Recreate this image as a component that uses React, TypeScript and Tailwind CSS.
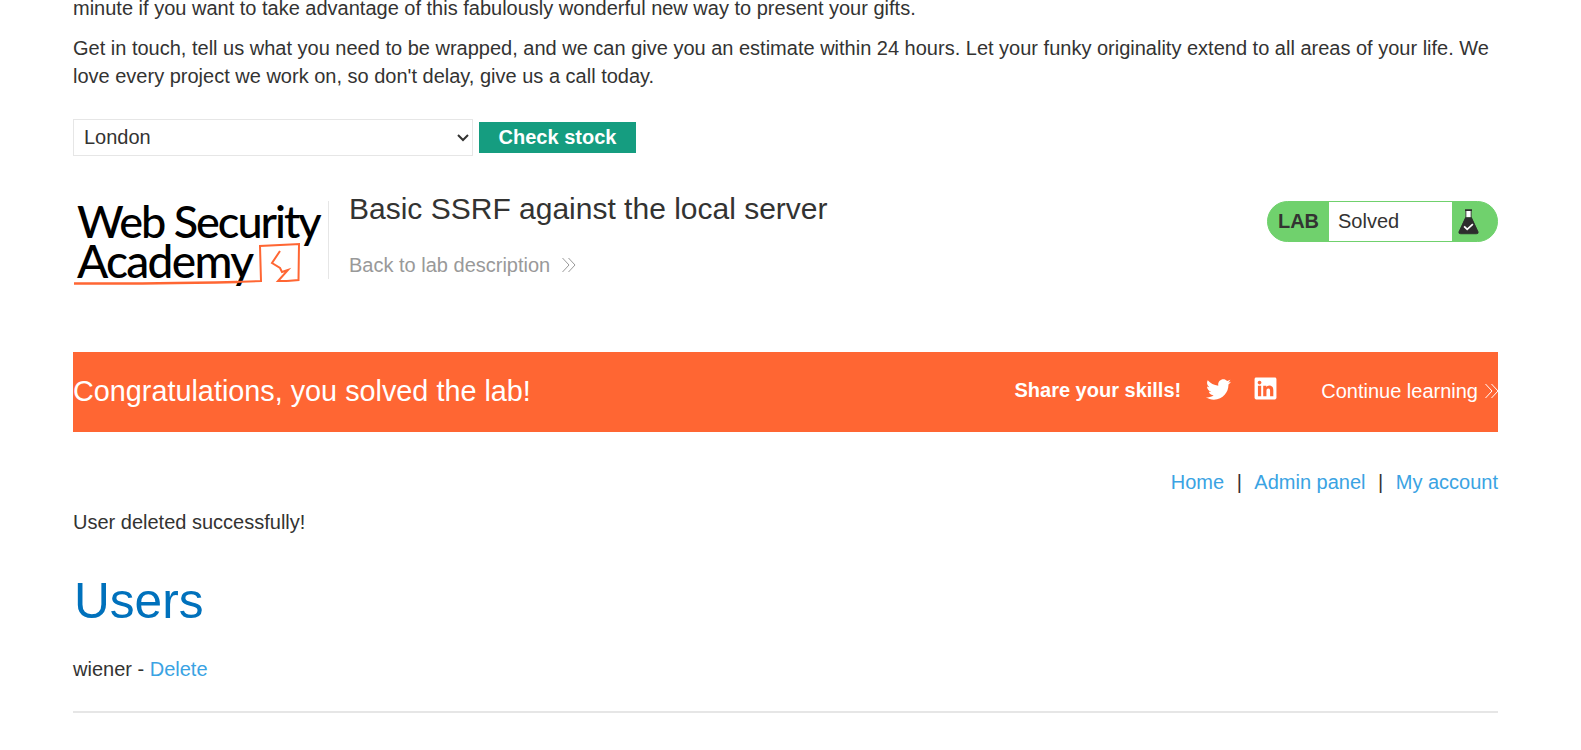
import React from "react";
import { FaTwitter, FaLinkedin } from "react-icons/fa";

function Chevrons({ className }: { className?: string }) {
  return (
    <svg viewBox="0 0 16 16" className={className} fill="none" stroke="currentColor" strokeWidth="1">
      <path d="M1.5 1 L8 8 L1.5 15" />
      <path d="M7.5 1 L14 8 L7.5 15" />
    </svg>
  );
}

function Logo() {
  return (
    <div className="relative w-[252px] h-[92px] shrink-0 font-['Lato',sans-serif] font-medium text-black">
      <div className="absolute left-[4px] top-[-3px] text-[45px] leading-[50px] tracking-[-2px] whitespace-nowrap">Web Security</div>
      <div className="absolute left-[4px] top-[37px] text-[46px] leading-[50px] tracking-[-1.7px] whitespace-nowrap">Academy</div>
      <svg viewBox="0 0 252 92" className="absolute inset-0 w-[252px] h-[92px]" fill="none" stroke="#ff6633" strokeWidth="2">
        <path d="M1 84.5 C50 85 110 84 164 83" strokeWidth="2.5" />
        <path d="M162 83 L188 82 L187 47 C205 46 215 45.5 226 45 L225.5 81 L214 82" />
        <path d="M207 52 L199 64 L207 69 L209 73 L215 71 L205 82 L214 82" />
      </svg>
    </div>
  );
}

function Flask() {
  return (
    <svg viewBox="0 0 24 30" className="w-[21px] h-[27px]">
      <rect x="8" y="1" width="8" height="2" fill="#2d2d2d" />
      <path d="M9 3 H15 V10 H9 Z" fill="#fff" />
      <path d="M9 3 V10 L1 27 Q0.5 29 3 29 H21 Q23.5 29 23 27 L15 10 V3" fill="none" stroke="#2d2d2d" strokeWidth="1" />
      <path d="M8.5 10 H15.5 L23 27 Q23.5 29 21 29 H3 Q0.5 29 1 27 Z" fill="#2d2d2d" />
      <path d="M7 20.5 L10.5 24 L17 18" fill="none" stroke="#fff" strokeWidth="2" />
    </svg>
  );
}

export default function App() {
  return (
    <div className="h-[750px] overflow-hidden bg-white pl-[73px] pr-[83px] font-['Liberation_Sans',Arial,sans-serif] text-[20px] leading-[28px] text-[#333332]">
      <p className="-mt-[6px] whitespace-nowrap">minute if you want to take advantage of this fabulously wonderful new way to present your gifts.</p>
      <p className="mt-[12px]">
        Get in touch, tell us what you need to be wrapped, and we can give you an estimate within 24 hours. Let your funky originality extend to all areas of your life. We love every project we work on, so don't delay, give us a call today.
      </p>

      <div className="mt-[29px] flex items-center gap-[6px]">
        <div className="relative">
          <select className="block h-[37px] w-[400px] appearance-none border border-[#e6e6e6] bg-white pl-[10px] pb-[2px] text-[20px] text-[#333332]">
            <option>London</option>
          </select>
          <svg viewBox="0 0 12 8" className="pointer-events-none absolute right-[4px] top-[15px] h-[8px] w-[12px]" fill="none" stroke="#333332" strokeWidth="2">
            <path d="M1 1 L6 6 L11 1" />
          </svg>
        </div>
        <button className="h-[31px] w-[157px] bg-[#159d80] text-center text-[20px] font-bold leading-[31px] text-white">Check stock</button>
      </div>

      <div className="mt-[43px] flex items-start">
        <Logo />
        <div className="ml-[3px] mt-[2px] h-[78px] border-l border-[#e6e6e6] pl-[20px]">
          <h2 className="text-[30px] leading-[14px] pt-[1px] text-[#333332] whitespace-nowrap">Basic SSRF against the local server</h2>
          <a className="mt-[35px] flex items-center gap-[11px] text-[#999] text-[20px] leading-[28px] whitespace-nowrap">
            Back to lab description
            <Chevrons className="h-[16px] w-[16px]" />
          </a>
        </div>
        <div className="ml-auto mt-[2px] flex h-[41px] w-[231px] overflow-hidden rounded-[21px] border border-[#70d16d] bg-[#70d16d]">
          <div className="flex w-[61px] items-center justify-center pb-[1px] text-[20px] font-bold text-[#333332]">LAB</div>
          <div className="flex w-[123px] items-center bg-white pb-[2px] pl-[9px] text-[20px] text-[#333332]">Solved</div>
          <div className="flex flex-1 items-center justify-start pl-[6px]"><Flask /></div>
        </div>
      </div>

      <div className="mt-[61px] flex h-[80px] items-center bg-[#ff6633] text-white">
        <h4 className="-mt-[2px] text-[28.8px] leading-[36px]">Congratulations, you solved the lab!</h4>
        <div className="ml-auto -mr-[2px] -mt-[2px] flex items-center">
          <span className="-mt-[2px] text-[20px] font-bold">Share your skills!</span>
          <FaTwitter className="ml-[25px] -mt-[4px] h-[25px] w-[25px]" />
          <FaLinkedin className="ml-[22px] -mt-[6px] h-[25px] w-[25px]" />
          <span className="ml-[43px] text-[20px] whitespace-nowrap">Continue learning</span>
          <Chevrons className="ml-[6px] h-[16px] w-[16px]" />
        </div>
      </div>

      <nav className="mt-[36px] flex justify-end text-[20px] leading-[28px] text-[#333332]">
        <a className="text-[#3aa3e3]">Home</a>
        <span className="mx-[12.5px]">|</span>
        <a className="text-[#3aa3e3]">Admin panel</a>
        <span className="mx-[12.5px]">|</span>
        <a className="text-[#3aa3e3]">My account</a>
      </nav>

      <p className="mt-[12px]">User deleted successfully!</p>

      <h1 className="mt-[30px] pl-[1px] text-[49.6px] leading-[70px] text-[#0071bc]">Users</h1>

      <p className="mt-[19px]">wiener - <a className="text-[#3aa3e3]">Delete</a></p>

      <hr className="mt-[28px] border-t-2 border-[#e6e6e6]" />
    </div>
  );
}
